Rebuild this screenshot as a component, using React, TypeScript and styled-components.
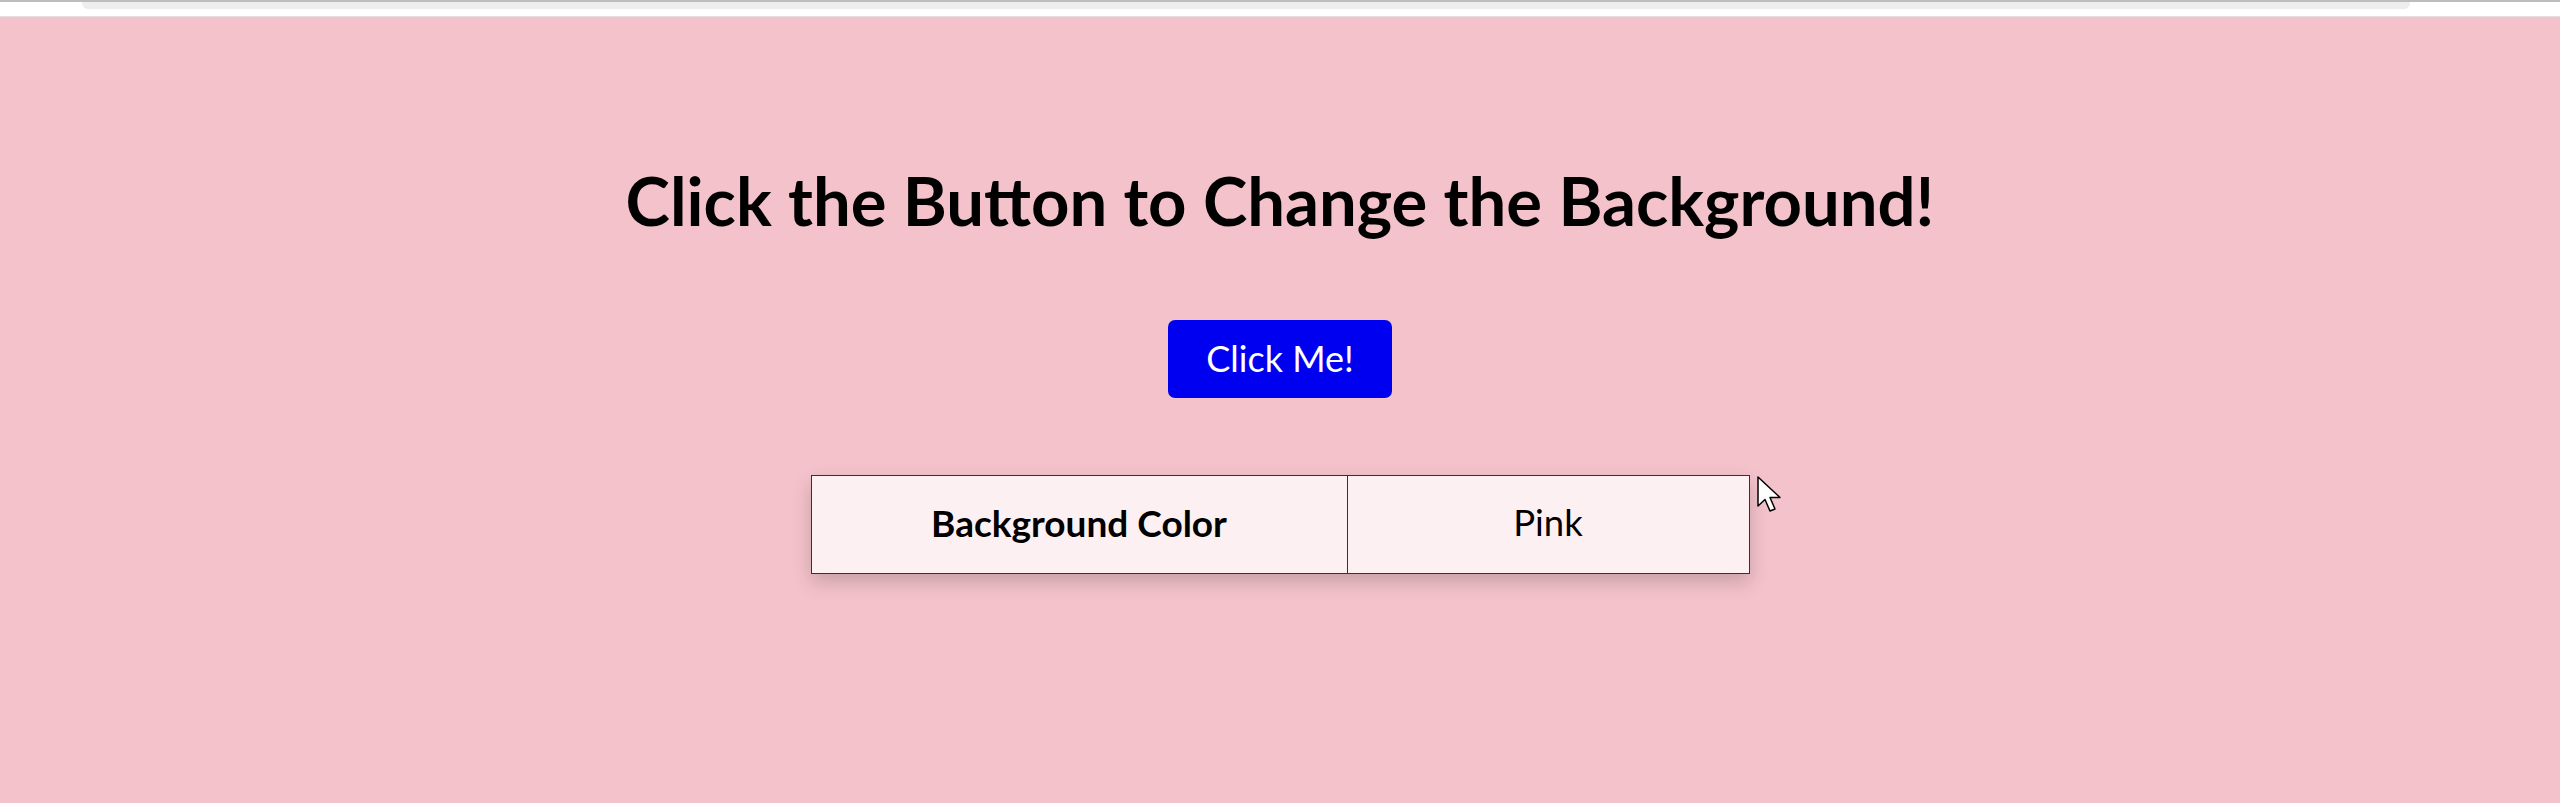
import React from "react";
import styled, { createGlobalStyle } from "styled-components";

const Global = createGlobalStyle`
  html, body { margin: 0; padding: 0; }
  body { background: #f4c2ca; font-family: "Lato", "Noto Sans", sans-serif; }
`;

const Page = styled.div`
  width: 2560px;
  height: 803px;
  position: relative;
  overflow: hidden;
  background: #f4c2ca;
`;

const Chrome = styled.div`
  height: 17px;
  background: #ffffff;
  border-top: 2px solid #bdbdbd;
  border-bottom: 1px solid #e4dcdd;
  box-sizing: border-box;
  padding: 0 150px 0 82px;
`;

const ChromeBar = styled.div`
  height: 6px;
  background: #eeeeee;
  border-radius: 0 0 10px 10px;
  box-shadow: 0 1px 1px rgba(0, 0, 0, 0.08);
`;

const Main = styled.main`
  display: flex;
  flex-direction: column;
  align-items: center;
`;

const Title = styled.h1`
  margin: 0;
  padding-top: 143px;
  font-size: 67px;
  line-height: 80px;
  font-weight: 700;
  color: #000;
`;

const Button = styled.button`
  margin-top: 80px;
  width: 224px;
  height: 78px;
  background: #0000f0;
  color: #fff;
  border: none;
  border-radius: 7px;
  font-family: inherit;
  font-size: 36px;
  padding: 0 0 3px;
  cursor: pointer;
`;

const Table = styled.table`
  margin-top: 77px;
  border-collapse: collapse;
  box-shadow: 0 8px 18px rgba(0, 0, 0, 0.18);
`;

const Cell = styled.td<{ $w: number; $bold?: boolean }>`
  width: ${(p) => p.$w}px;
  height: 98px;
  padding: 0 0 5px;
  box-sizing: border-box;
  border: 1px solid #333;
  background: #fdf0f3;
  text-align: center;
  font-size: ${(p) => (p.$bold ? 37 : 36.5)}px;
  font-weight: ${(p) => (p.$bold ? 700 : 400)};
  color: #000;
`;

const Cursor = styled.svg`
  position: absolute;
  left: 1757px;
  top: 476px;
`;

export default function App() {
  return (
    <Page>
      <Global />
      <Chrome>
        <ChromeBar />
      </Chrome>
      <Main>
        <Title>Click the Button to Change the Background!</Title>
        <Button>Click Me!</Button>
        <Table>
          <tbody>
            <tr>
              <Cell $w={536} $bold>
                Background Color
              </Cell>
              <Cell $w={402}>Pink</Cell>
            </tr>
          </tbody>
        </Table>
      </Main>
      <Cursor width="26" height="38" viewBox="0 0 26 38">
        <path
          d="M1 1 L1 30 L8 23.5 L13 35 L18 33 L13 21.5 L23 21.5 Z"
          fill="#fff"
          stroke="#000"
          strokeWidth="1.5"
          strokeLinejoin="round"
        />
      </Cursor>
    </Page>
  );
}
